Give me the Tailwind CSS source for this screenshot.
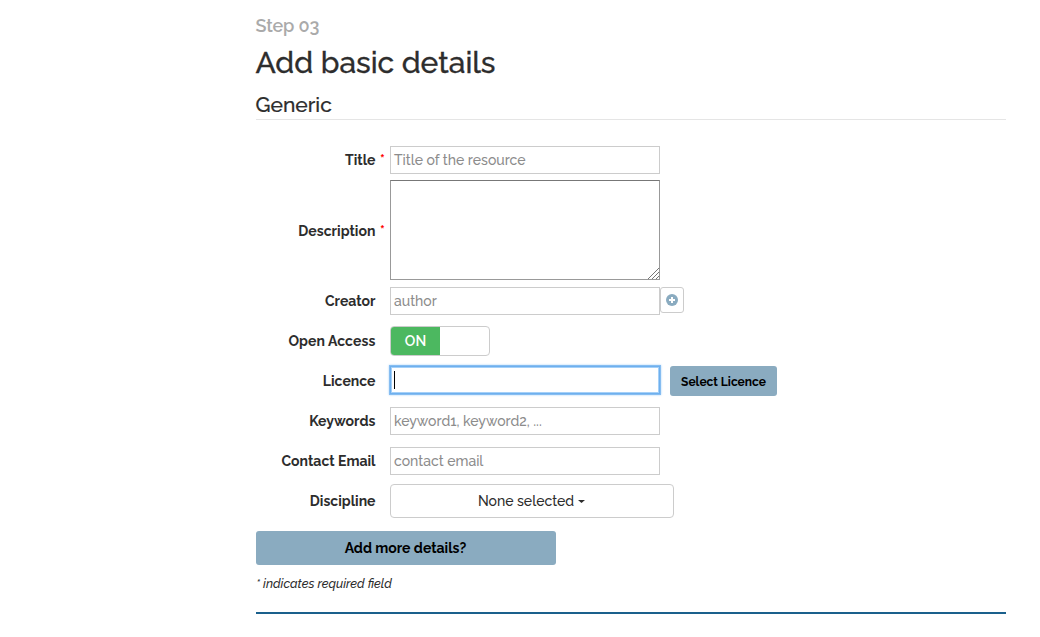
<!DOCTYPE html>
<html lang="en">
<head>
<meta charset="utf-8">
<title>Add basic details</title>
<script src="https://cdn.jsdelivr.net/npm/@tailwindcss/browser@4"></script>
</head>
<body class="bg-white font-['Raleway','Lato',sans-serif] text-[14px] leading-5 text-[#2d2d2d]">
<main class="ml-64 w-[750px] pt-4">
  <p class="-ml-[0.5px] h-5 text-[18px] font-semibold text-[#aaa] whitespace-nowrap"><span class="tracking-[-0.15px]">Step 03</span></p>
  <h1 class="-ml-[0.5px] mt-1.5 h-10 text-[30px] font-medium leading-[41px] whitespace-nowrap"><span class="[-webkit-text-stroke:0.3px_#2d2d2d]">Add basic details</span></h1>
  <h2 class="mt-2 h-[30px] border-b border-[#e5e5e5] text-[21px] font-medium leading-[30px]"><span class="-ml-[0.5px] [-webkit-text-stroke:0.2px_#2d2d2d]">Generic</span></h2>

  <form class="mt-[26px]">
    <div class="flex h-7 items-center">
      <label class="w-[120px] pr-[0.5px] text-right font-bold">Title</label><span class="w-3.5 pl-1 text-[14px] font-bold text-[#f00]">*</span>
      <div class="h-7 w-[270px] border border-[#ccc] px-[3px] font-medium leading-[26px] text-[#8c8c8c]"><span>Title of the resource</span></div>
    </div>
    <div class="mt-1.5 flex h-[100px] items-center">
      <label class="w-[120px] pt-0.5 pr-[0.5px] text-right font-bold tracking-[0.04px]">Description</label><span class="w-3.5 pt-0.5 pl-1 text-[14px] font-bold text-[#f00]">*</span>
      <div class="flex h-[100px] w-[270px] items-end justify-end border border-[#999] border-t-[#777]">
        <svg class="size-3" viewBox="0 0 12 12" fill="none" stroke="#777" stroke-width="1"><path d="M1 12 12 1M5 12l7-7M9 12l3-3"/></svg>
      </div>
    </div>
    <div class="mt-[7px] flex h-7 items-center">
      <label class="mr-3.5 w-[120px] pr-[0.5px] text-right font-bold">Creator</label>
      <div class="h-7 w-[270px] border border-[#ccc] px-[3px] font-medium leading-[26px] text-[#8c8c8c]"><span>author</span></div>
      <button type="button" class="flex h-[26px] w-6 items-center justify-center self-start rounded-[3px] border border-[#ccc]">
        <svg class="size-3" viewBox="0 0 12 12"><circle cx="6" cy="6" r="6" fill="#8aabc0"/><path d="M6 3v6M3 6h6" stroke="#fff" stroke-width="2"/></svg>
      </button>
    </div>
    <div class="mt-[11px] flex h-[30px] items-center">
      <label class="mr-3.5 w-[120px] pr-[0.5px] text-right font-bold tracking-[0.08px]">Open Access</label>
      <div class="flex h-[30px] w-[100px] overflow-hidden rounded-[4px] border border-[#ccc]"><span class="w-[49px] bg-[#4cb860] text-center font-semibold leading-7 text-white">ON</span></div>
    </div>
    <div class="mt-2.5 flex h-[30px] items-center">
      <label class="mr-3.5 w-[120px] pr-[0.5px] text-right font-bold">Licence</label>
      <div class="flex h-7 w-[270px] items-center self-start border border-[#6eb0ee] px-[3px] shadow-[0_0_0_1px_#86bdf1,0_0_2px_1px_#a9d2f8,inset_0_0_0_1px_#a5d0f8]"><span class="h-[18px] w-px bg-black"></span></div>
      <button type="button" class="ml-2.5 h-[30px] w-[107px] rounded-[3px] bg-[#8aabc0] pt-px text-[12px] font-bold text-black"><span>Select Licence</span></button>
    </div>
    <div class="mt-[11px] flex h-7 items-center">
      <label class="mr-3.5 w-[120px] pr-[0.5px] text-right font-bold tracking-[0.04px]">Keywords</label>
      <div class="h-7 w-[270px] border border-[#ccc] px-[3px] font-medium leading-[26px] text-[#8c8c8c]"><span>keyword1, keyword2, ...</span></div>
    </div>
    <div class="mt-3 flex h-7 items-center">
      <label class="mr-3.5 w-[120px] pr-[0.5px] text-right font-bold">Contact Email</label>
      <div class="h-7 w-[270px] border border-[#ccc] px-[3px] font-medium leading-[26px] text-[#8c8c8c]"><span>contact email</span></div>
    </div>
    <div class="mt-[9px] flex h-[34px] items-center">
      <label class="mr-3.5 w-[120px] pr-[0.5px] text-right font-bold">Discipline</label>
      <button type="button" class="flex h-[34px] w-[284px] items-center justify-center rounded-[4px] border border-[#ccc] pr-px font-medium"><span>None selected</span>
        <svg class="ml-1 h-[3px] w-[7px]" viewBox="0 0 7 3"><path d="M0 0h7L3.5 3z" fill="#2d2d2d"/></svg></button>
    </div>
    <button type="button" class="mt-[13px] block h-[34px] w-[300px] rounded-[3px] bg-[#8aabc0] pr-px font-bold text-black"><span>Add more details?</span></button>
    <p class="mt-[9px] h-[19px] text-[12.5px] font-medium italic"><span>* indicates required field</span></p>
  </form>
  <hr class="mt-[19px] border-t-2 border-[#1a608c]">
</main>
</body>
</html>
